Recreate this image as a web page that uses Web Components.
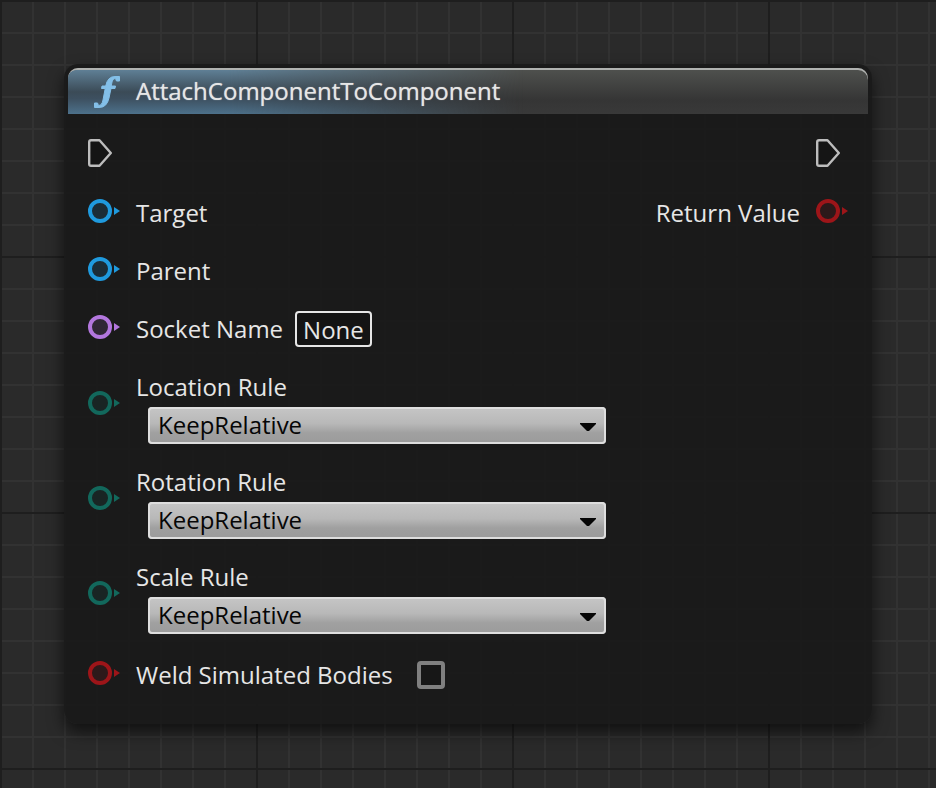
<!DOCTYPE html>
<html lang="en">
<head>
<meta charset="utf-8">
<title>AttachComponentToComponent</title>
<style>
html { background: #fff; }
body { margin: 0; font: 24px/32px "Open Sans", "Noto Sans", sans-serif; color: #e6e6e6; }
</style>
</head>
<body>
<graph-canvas>
  <graph-node heading="AttachComponentToComponent">
    <exec-pin slot="in" label="Execute"></exec-pin>
    <pin-row slot="in" color="#1f9ade">Target</pin-row>
    <pin-row slot="in" color="#1f9ade">Parent</pin-row>
    <pin-row slot="in" color="#b377de"><name-field label="Socket Name" value="None"></name-field></pin-row>
    <pin-row slot="in" color="#12685c" tall><rule-select label="Location Rule"></rule-select></pin-row>
    <pin-row slot="in" color="#12685c" tall><rule-select label="Rotation Rule"></rule-select></pin-row>
    <pin-row slot="in" color="#12685c" tall><rule-select label="Scale Rule"></rule-select></pin-row>
    <pin-row slot="in" color="#9d1519" last><check-field label="Weld Simulated Bodies"></check-field></pin-row>
    <exec-pin slot="out" label="Then"></exec-pin>
    <pin-row slot="out" color="#9d1519" output>Return Value</pin-row>
  </graph-node>
</graph-canvas>
<script>
class Base extends HTMLElement {
  constructor() {
    super();
    this.attachShadow({ mode: "open" });
  }
  connectedCallback() {
    this.shadowRoot.innerHTML = this.view();
  }
  attr(name) { return this.getAttribute(name) || ""; }
}

customElements.define("graph-canvas", class extends Base {
  view() {
    return `<style>
      :host {
        display: block; box-sizing: border-box; min-height: 100vh;
        margin-right: 4px; padding: 64px;
        background:
          linear-gradient(#1e1e1e 2px, transparent 2px) 0 0 / 256px 256px,
          linear-gradient(90deg, #1e1e1e 2px, transparent 2px) 0 0 / 256px 256px,
          linear-gradient(#323232 2px, transparent 2px) 0 0 / 32px 32px,
          linear-gradient(90deg, #323232 2px, transparent 2px) 0 0 / 32px 32px,
          #2a2a2a;
      }
    </style><slot></slot>`;
  }
});

customElements.define("graph-node", class extends Base {
  view() {
    return `<style>
      :host {
        display: block; padding: 4px 4px 22px; border-radius: 14px;
        background: rgba(26, 26, 26, .96);
        box-shadow: 0 8px 16px rgba(0, 0, 0, .6);
      }
      header {
        display: flex; align-items: center; gap: 16px; height: 46px;
        box-sizing: border-box; padding: 0 24px; border-radius: 10px 10px 0 0;
        box-shadow: inset 0 2px #b0b2b0;
        background: linear-gradient(#50524f, #353535 70%, #393939);
        position: relative; isolation: isolate;
      }
      header::before {
        content: ""; position: absolute; inset: 2px 0 0; z-index: -1;
        border-radius: 8px 8px 0 0;
        background: linear-gradient(#5f7f95, #3b4b57 50%, #3d5060 65%, #4d718b);
        mask-image: linear-gradient(90deg, #000 20%, transparent 57%);
      }
      h1 { margin: 0; font: inherit; color: #e6e6e6; text-shadow: 0 0 1px rgba(230, 230, 230, .7); }
      svg { display: block; width: 28px; height: 32px; margin-top: 2px; }
      main { display: flex; justify-content: space-between; padding: 10px 20px 0; }
      .in { flex: 1; }
      .out { display: flex; flex-direction: column; }
    </style>
    <header>
      <svg viewBox="0 0 28 32" fill="#83bfe8" stroke="#83bfe8" aria-hidden="true">
        <path d="M27.500 .5V5H24.500L23.500 2.500Q20.500 2.500 19.800 7L19.300 10H23.500L23 12.500H19L17 22Q15 31.500 7 31.500H2.500V27H5.500L6.500 29.500Q10 29.500 11 24L13.200 12.500H9.500L10 10H13.700Q15.500 .5 23 .5Z"/>
      </svg>
      <h1>${this.attr("heading")}</h1>
    </header>
    <main>
      <div class="in"><slot name="in"></slot></div>
      <div class="out"><slot name="out"></slot></div>
    </main>`;
  }
});

customElements.define("exec-pin", class extends Base {
  view() {
    return `<style>
      :host { display: flex; align-items: center; height: 58px; }
      :host([slot="out"]) { justify-content: flex-end; padding-right: 8px; }
      svg { display: block; width: 24px; height: 28px; }
    </style>
    <svg viewBox="0 0 24 28" role="img" aria-label="${this.attr("label")}">
      <path d="M3 1.200H11.500L22.800 14L11.500 26.800H3Q1.200 26.800 1.200 25V3Q1.200 1.200 3 1.200Z" fill="#151515" stroke="#bdbdbd" stroke-width="2.400" stroke-linejoin="round"/>
    </svg>`;
  }
});

customElements.define("pin-row", class extends Base {
  view() {
    return `<style>
      :host { display: flex; align-items: center; gap: 16px; height: 58px; }
      :host([tall]) { height: 94px; margin-bottom: 1px; }
      :host([output]) { flex-direction: row-reverse; }
      :host([last]) { margin-top: 4px; }
      svg { display: block; flex: none; width: 32px; height: 24px; }
      .content { flex: 1; padding-top: 4px; }
      :host([tall]) .content { align-self: flex-start; padding-top: 15px; }
    </style>
    <svg viewBox="0 0 32 24" fill="${this.attr("color")}" aria-hidden="true">
      <circle cx="12" cy="12" r="10" fill-opacity=".15" stroke="${this.attr("color")}" stroke-width="4"/>
      <path d="M26 8L32 12L26 16Z"/>
    </svg>
    <div class="content"><slot></slot></div>`;
  }
});

customElements.define("name-field", class extends Base {
  view() {
    return `<style>
      :host { display: flex; align-items: center; gap: 12px; }
      input {
        box-sizing: border-box; width: 77px; height: 36px; padding: 0 6px;
        border: 2px solid #e6e6e6; border-radius: 4px; outline: 0;
        background: #141414; color: inherit; font: inherit;
      }
    </style>
    <label for="f">${this.attr("label")}</label><input id="f" value="${this.attr("value")}">`;
  }
});

customElements.define("rule-select", class extends Base {
  view() {
    return `<style>
      :host { display: grid; gap: 4px; }
      .box { display: grid; align-items: center; max-width: 458px; margin-left: 12px; }
      .box > * { grid-area: 1 / 1; }
      select {
        appearance: none; box-sizing: border-box; width: 100%; height: 37px; margin: 0;
        padding: 1px 34px 3px 10px; border: 0; border-radius: 4px; outline: 0;
        box-shadow: inset 0 0 0 2px #dedede;
        background: linear-gradient(#c6c6c6, #b8b8b8 45%, #a0a0a0 70%, #9b9b9b);
        color: #060606; font: inherit;
      }
      svg { justify-self: end; width: 16px; height: 8px; margin: 3px 10px 0 0; pointer-events: none; }
    </style>
    <label for="s">${this.attr("label")}</label>
    <div class="box">
      <select id="s"><option>KeepRelative</option><option>KeepWorld</option><option>SnapToTarget</option></select>
      <svg viewBox="0 0 16 8" aria-hidden="true"><path d="M0 0H16V1L9 8H7L0 1Z" fill="#060606"/></svg>
    </div>`;
  }
});

customElements.define("check-field", class extends Base {
  view() {
    return `<style>
      :host { display: flex; align-items: center; gap: 24px; }
      input {
        appearance: none; box-sizing: border-box; width: 28px; height: 28px; margin: 0;
        border: 4px solid #808080; border-radius: 4px; background: #171717;
      }
      input:checked { background: #c0c0c0; background-clip: content-box; padding: 3px; }
    </style>
    <label for="c">${this.attr("label")}</label><input id="c" type="checkbox">`;
  }
});
</script>
</body>
</html>
